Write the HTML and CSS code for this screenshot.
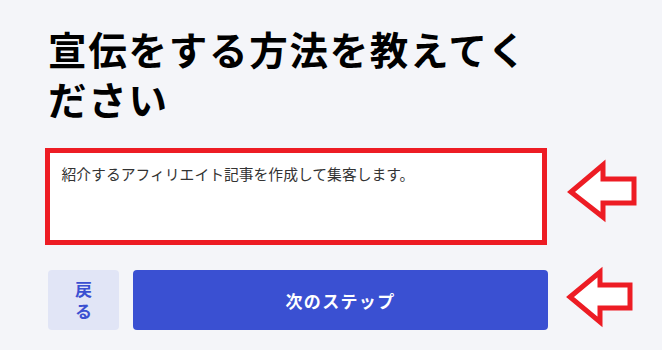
FILE: index.html
```html
<!DOCTYPE html>
<html lang="ja">
<head>
	<meta charset="utf-8">
	<title>宣伝方法</title>
	<link rel="stylesheet" href="styles.css">
</head>
<body>
	<div class="wrap">
		<h1 class="title">宣伝をする方法を教えてください</h1>
		<textarea class="answer" readonly>紹介するアフィリエイト記事を作成して集客します。</textarea>
		<div class="actions">
			<button class="back"><span>戻る</span></button>
			<button class="next">次のステップ</button>
		</div>
	</div>

	<!-- 注釈の矢印 -->
	<svg class="arrow arrow-top" width="85" height="70" viewBox="0 0 85 70">
		<polygon points="11,37 43,10 43,24 74,24 74,48 43,48 43,62" />
	</svg>
	<svg class="arrow arrow-bottom" width="85" height="70" viewBox="0 0 85 70">
		<polygon points="10,35 40,10 40,23 70,23 70,46 40,46 40,60" />
	</svg>
</body>
</html>
```

FILE: styles.css
```css
* {
	margin: 0;
	padding: 0;
	box-sizing: border-box;
}
body {
	background: #f4f5f9;
	font-family: "Noto Sans CJK JP", "Noto Sans", sans-serif;
	color: #000;
}
.wrap {
	width: 548px;
	padding: 23px 0 0 48px;
}
.title {
	font-size: 38.5px;
	line-height: 50px;
	font-weight: 700;
	letter-spacing: 0.045em;
}
.answer {
	display: block;
	width: 502px;
	height: 97px;
	margin: 25px 0 0 -3.5px;
	padding: 10px 12px;
	border: 5px solid #ed1c24;
	background: #fff;
	font-family: inherit;
	font-size: 14.8px;
	line-height: 1.5;
	color: #333;
	resize: none;
	outline: none;
}
.actions {
	display: flex;
	gap: 14px;
	margin-top: 25px;
}
.actions button {
	height: 60px;
	border: none;
	border-radius: 4px;
	font-family: inherit;
	font-weight: 700;
	font-size: 17px;
}
.back {
	width: 71px;
	background: #e1e5f6;
	color: #3b50d1;
	line-height: 22px;
}
.back span {
	display: block;
	width: 1em;
	margin: 0 auto;
}
.next {
	flex: 1;
	background: #3a50d2;
	color: #fff;
	font-size: 17.5px;
	letter-spacing: 0.08em;
}
.arrow {
	position: absolute;
	left: 560px;
}
.arrow polygon {
	fill: #fff;
	stroke: #ed1c24;
	stroke-width: 5;
}
.arrow-top {
	top: 155px;
}
.arrow-bottom {
	top: 262px;
}
```
